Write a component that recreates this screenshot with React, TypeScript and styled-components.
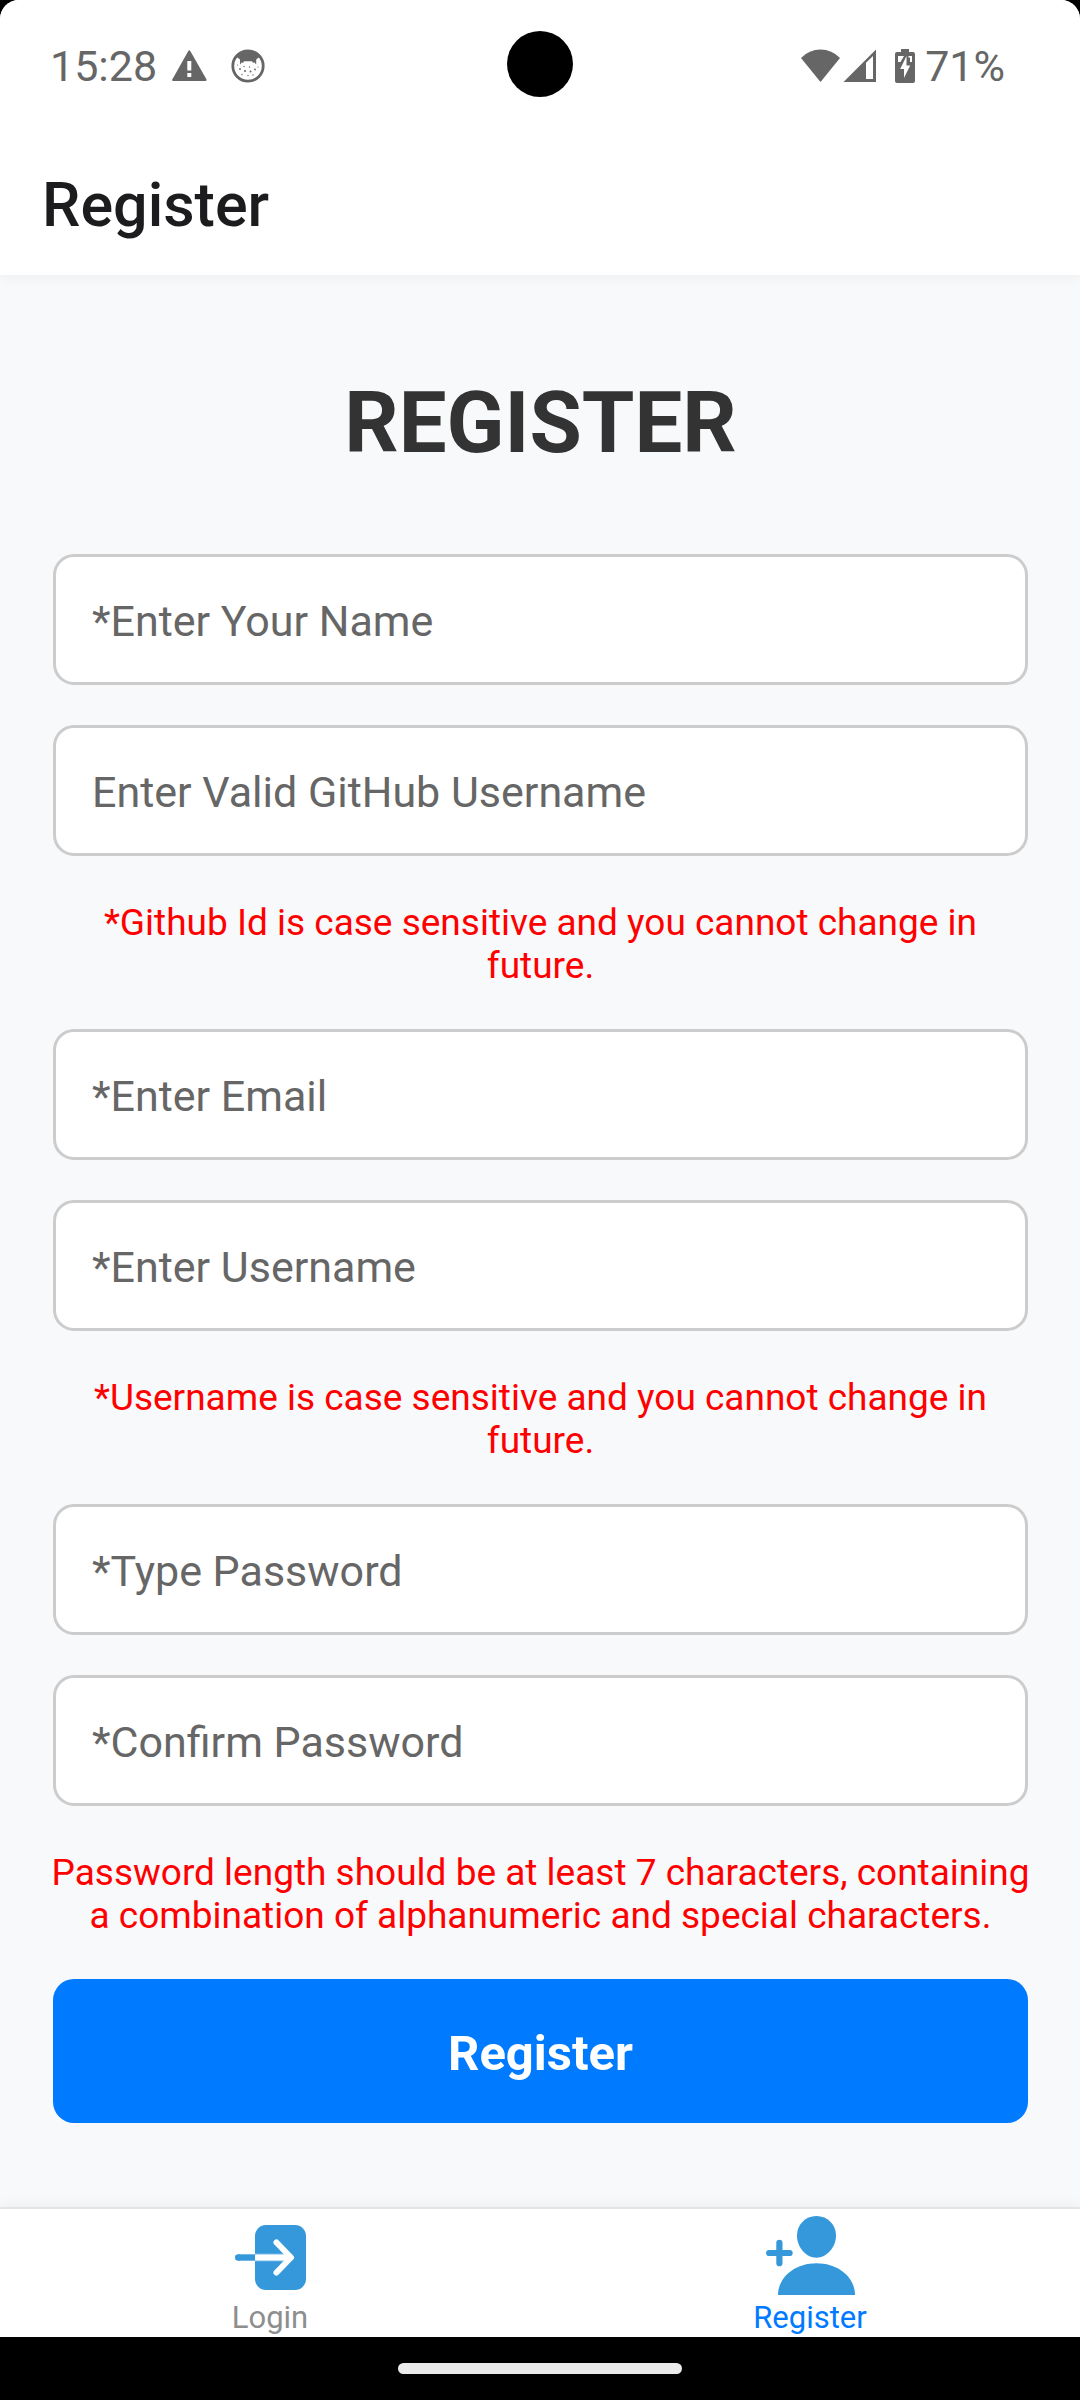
import React from "react";
import styled, { createGlobalStyle } from "styled-components";

const GlobalStyle = createGlobalStyle`
  *, *::before, *::after { box-sizing: border-box; }
  body {
    margin: 0;
    background: #000;
    font-family: Roboto, "Noto Sans", sans-serif;
  }
`;

const Screen = styled.div`
  min-height: 100vh;
  display: flex;
  flex-direction: column;
  background: #f8f9fb;
  border-radius: 19px 19px 0 0;
  overflow: hidden;
`;

const StatusBar = styled.div`
  position: relative;
  z-index: 1;
  display: grid;
  grid-template-columns: 1fr auto 1fr;
  align-items: center;
  height: 128px;
  padding: 0 75px 0 50px;
  background: #fff;
  color: #666;
  font-size: 43px;
  line-height: 52px;
`;

const StatusGroup = styled.div<{ $end?: boolean }>`
  display: flex;
  align-items: center;
  justify-content: ${(p) => (p.$end ? "flex-end" : "flex-start")};
  padding-top: 3px;
`;

const StatusIcon = styled.svg<{ $gap: number }>`
  display: block;
  flex: none;
  margin-left: ${(p) => p.$gap}px;
`;

const StatusText = styled.span<{ $gap?: number }>`
  margin-left: ${(p) => p.$gap ?? 0}px;
`;

const Camera = styled.div`
  width: 66px;
  height: 66px;
  margin-left: 25px;
  border-radius: 50%;
  background: #000;
`;

const Header = styled.header`
  position: relative;
  display: flex;
  align-items: center;
  height: 147px;
  padding: 6px 42px 0;
  background: #fff;
  box-shadow: 0 2px 14px rgba(0, 0, 0, 0.05);
`;

const HeaderTitle = styled.span`
  color: #1c1c1e;
  font-size: 61px;
  font-weight: 500;
  line-height: 72px;
`;

const Main = styled.main`
  flex: 1;
  padding: 99px 52px 84px 53px;
`;

const Title = styled.h1`
  margin: 0 0 82px;
  color: #333;
  font-size: 85px;
  font-weight: 700;
  line-height: 98px;
  text-align: center;
`;

const Form = styled.form`
  display: flex;
  flex-direction: column;
  gap: 40px;
`;

const Field = styled.input`
  width: 100%;
  height: 131px;
  padding: 3px 36px 0;
  border: 3px solid #ccc;
  border-radius: 21px;
  outline: none;
  background: #fff;
  color: #333;
  font-family: inherit;
  font-size: 43px;

  &::placeholder {
    color: #666;
    opacity: 1;
  }
`;

const Note = styled.p`
  margin: 0 -4px;
  padding: 5px 0 2px;
  color: #f00;
  font-size: 37px;
  line-height: 43px;
  text-align: center;
`;

const Submit = styled.button`
  height: 144px;
  padding: 4px 0 0;
  border: 0;
  border-radius: 21px;
  background: #007bff;
  color: #fff;
  font-family: inherit;
  font-size: 49px;
  font-weight: 700;
`;

const TabBar = styled.nav`
  position: relative;
  display: flex;
  border-top: 2px solid #e4e4e5;
  background: #fff;
  box-shadow: 0 -2px 14px rgba(0, 0, 0, 0.05);
`;

const Tab = styled.a<{ $active?: boolean }>`
  flex: 1;
  display: flex;
  flex-direction: column;
  align-items: center;
  gap: 2px;
  padding-top: 7px;
  color: ${(p) => (p.$active ? "#007aff" : "#8e8e8f")};
  font-size: 31px;
  line-height: 39px;
  text-decoration: none;
`;

const TabIcon = styled.svg`
  display: block;
`;

const GestureBar = styled.div`
  display: flex;
  justify-content: center;
  align-items: center;
  height: 63px;
  background: #000;
`;

const GestureHandle = styled.div`
  width: 284px;
  height: 11px;
  border-radius: 6px;
  background: #ebebeb;
`;

function Entry({ label, type = "text" }: { label: string; type?: string }) {
  return <Field type={type} placeholder={label} aria-label={label.replace("*", "")} />;
}

function WarningIcon() {
  return (
    <StatusIcon $gap={15} width="35" height="32" viewBox="0 0 35 32" aria-hidden="true">
      <path fill="#666" d="M16.2 1.2Q17.3-.6 18.4 1.2L34.4 29.2Q35.2 31 33.2 31H1.5Q-.6 31 .4 29.2Z" />
      <path fill="#fff" d="M15.3 11h4v9.500h-4zM15.300 23h4v4h-4z" />
    </StatusIcon>
  );
}

function CatIcon() {
  return (
    <StatusIcon $gap={24} width="34" height="34" viewBox="0 0 34 34" aria-hidden="true">
      <circle cx="17" cy="17" r="15.200" fill="#fff" stroke="#666" strokeWidth="2.800" />
      <path
        fill="#666"
        d="M5 7.500 9 10.500 9 15.500 11 13.200 12 14 13 12.200H21L22.200 14 23.200 13.200 25.200 15.500V10.500L29 7.500C23 .5 11 .5 5 7.500Z"
      />
      <g fill="#666">
        <circle cx="9" cy="20" r=".9" />
        <circle cx="13" cy="17.500" r=".7" />
        <circle cx="14" cy="22" r="1" />
        <circle cx="19.500" cy="22.500" r="1" />
        <circle cx="18.500" cy="18" r=".7" />
        <circle cx="24" cy="20.500" r=".9" />
        <circle cx="27" cy="18" r=".6" />
        <circle cx="11" cy="25.500" r=".7" />
        <circle cx="17" cy="26.500" r=".7" />
        <circle cx="22" cy="26" r=".7" />
        <circle cx="6.500" cy="16" r=".6" />
      </g>
    </StatusIcon>
  );
}

function WifiIcon() {
  return (
    <StatusIcon $gap={0} width="39" height="34" viewBox="0 0 39 34" aria-hidden="true">
      <path fill="#666" d="M0 9Q8 .5 19.500 .5T39 9L19.500 33Z" />
    </StatusIcon>
  );
}

function SignalIcon() {
  return (
    <StatusIcon $gap={3} width="34" height="34" viewBox="0 0 34 34" aria-hidden="true">
      <path fill="#666" fillRule="evenodd" d="M33 .5V33H.5ZM23 13.800V30H30V7Z" />
    </StatusIcon>
  );
}

function BatteryIcon() {
  return (
    <StatusIcon $gap={18} width="20" height="34" viewBox="0 0 20 34" aria-hidden="true">
      <path fill="#666" d="M6 0h8v3h4q2 0 2 2v27q0 2-2 2H2q-2 0-2-2V5q0-2 2-2h4z" />
      <path fill="#fff" d="M3 7H9L5.500 13H3ZM13 7H17V13H15V8.500H13Z" />
      <path fill="#fff" d="M11.500 7V16.500H15.200L9 29V20H5.200Z" />
      <path fill="#666" d="M12.400 6.500H13.500V13H12.400Z" />
    </StatusIcon>
  );
}

function LoginIcon() {
  return (
    <TabIcon width="90" height="80" viewBox="0 0 90 80" aria-hidden="true">
      <rect x="30" y="9" width="51" height="65" rx="11" fill="#3498db" />
      <path d="M13.200 41.500H30" stroke="#3498db" strokeWidth="6.400" />
      <circle cx="13.200" cy="41.500" r="3.200" fill="#3498db" />
      <path d="M30 41.500H64" stroke="#a9d3f0" strokeWidth="7.400" />
      <path d="M30 41.500H64" stroke="#fff" strokeWidth="5.400" />
      <path
        d="M51.500 26.500 66 41.500 51.500 56.500"
        fill="none"
        stroke="#fff"
        strokeWidth="6"
        strokeLinecap="round"
        strokeLinejoin="round"
      />
      <path d="M58 41.500H66" stroke="#fff" strokeWidth="5.400" />
    </TabIcon>
  );
}

function RegisterIcon() {
  return (
    <TabIcon width="90" height="80" viewBox="0 0 90 80" aria-hidden="true">
      <path
        fill="#3498db"
        d="M51.300 0C62.500 0 71 8.500 71 19.500C71 31.500 61.500 41.700 51.300 41.700S32 31.500 32 19.500C32 8.500 40.500 0 51.300 0Z"
      />
      <path fill="#3498db" d="M13 79C13 62 29 47.300 51.500 47.300S90 62 90 79Z" />
      <path
        d="M4.200 37H24.600M14.400 26.800V47.200"
        stroke="#3498db"
        strokeWidth="6.200"
        strokeLinecap="round"
      />
    </TabIcon>
  );
}

export default function App() {
  return (
    <>
      <GlobalStyle />
      <Screen>
        <StatusBar>
          <StatusGroup>
            <StatusText>15:28</StatusText>
            <WarningIcon />
            <CatIcon />
          </StatusGroup>
          <Camera />
          <StatusGroup $end>
            <WifiIcon />
            <SignalIcon />
            <BatteryIcon />
            <StatusText $gap={10}>71%</StatusText>
          </StatusGroup>
        </StatusBar>
        <Header>
          <HeaderTitle>Register</HeaderTitle>
        </Header>
        <Main>
          <Title>REGISTER</Title>
          <Form onSubmit={(e) => e.preventDefault()}>
            <Entry label="*Enter Your Name" />
            <Entry label="Enter Valid GitHub Username" />
            <Note>*Github Id is case sensitive and you cannot change in future.</Note>
            <Entry label="*Enter Email" type="email" />
            <Entry label="*Enter Username" />
            <Note>*Username is case sensitive and you cannot change in future.</Note>
            <Entry label="*Type Password" type="password" />
            <Entry label="*Confirm Password" type="password" />
            <Note>
              Password length should be at least 7 characters, containing a combination of
              alphanumeric and special characters.
            </Note>
            <Submit type="submit">Register</Submit>
          </Form>
        </Main>
        <TabBar>
          <Tab href="#login">
            <LoginIcon />
            Login
          </Tab>
          <Tab href="#register" $active aria-current="page">
            <RegisterIcon />
            Register
          </Tab>
        </TabBar>
        <GestureBar>
          <GestureHandle />
        </GestureBar>
      </Screen>
    </>
  );
}
